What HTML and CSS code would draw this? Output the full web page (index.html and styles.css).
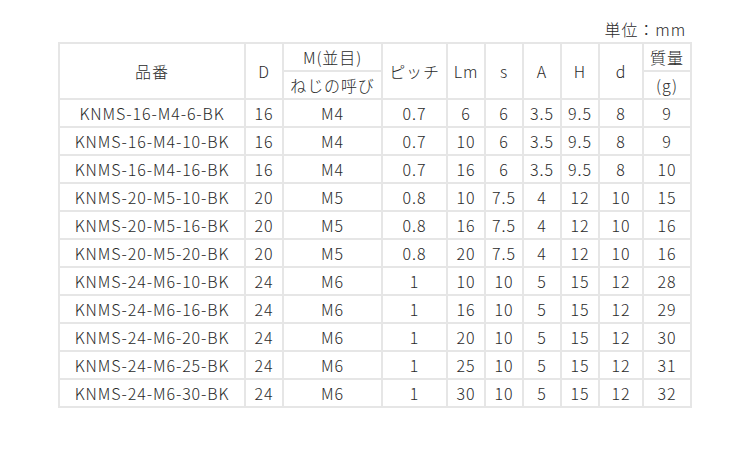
FILE: index.html
```html
<!DOCTYPE html>
<html lang="ja">
<head>
<meta charset="utf-8">
<link rel="stylesheet" href="styles.css">
</head>
<body>
<div class="wrap">
  <div class="unit">単位：mm</div>
  <table class="spec">
    <colgroup>
      <col class="c-name"><col class="c-d"><col class="c-m"><col class="c-p">
      <col class="c-n"><col class="c-n"><col class="c-n"><col class="c-n">
      <col class="c-dd"><col class="c-w">
    </colgroup>
    <thead>
      <tr>
        <th rowspan="2">品番</th>
        <th rowspan="2">D</th>
        <th>M(並目)</th>
        <th rowspan="2">ピッチ</th>
        <th rowspan="2">Lm</th>
        <th rowspan="2">s</th>
        <th rowspan="2">A</th>
        <th rowspan="2">H</th>
        <th rowspan="2">d</th>
        <th>質量</th>
      </tr>
      <tr>
        <th>ねじの呼び</th>
        <th>(g)</th>
      </tr>
    </thead>
    <tbody>
      <tr><td>KNMS-16-M4-6-BK</td><td>16</td><td>M4</td><td>0.7</td><td>6</td><td>6</td><td>3.5</td><td>9.5</td><td>8</td><td>9</td></tr>
      <tr><td>KNMS-16-M4-10-BK</td><td>16</td><td>M4</td><td>0.7</td><td>10</td><td>6</td><td>3.5</td><td>9.5</td><td>8</td><td>9</td></tr>
      <tr><td>KNMS-16-M4-16-BK</td><td>16</td><td>M4</td><td>0.7</td><td>16</td><td>6</td><td>3.5</td><td>9.5</td><td>8</td><td>10</td></tr>
      <tr><td>KNMS-20-M5-10-BK</td><td>20</td><td>M5</td><td>0.8</td><td>10</td><td>7.5</td><td>4</td><td>12</td><td>10</td><td>15</td></tr>
      <tr><td>KNMS-20-M5-16-BK</td><td>20</td><td>M5</td><td>0.8</td><td>16</td><td>7.5</td><td>4</td><td>12</td><td>10</td><td>16</td></tr>
      <tr><td>KNMS-20-M5-20-BK</td><td>20</td><td>M5</td><td>0.8</td><td>20</td><td>7.5</td><td>4</td><td>12</td><td>10</td><td>16</td></tr>
      <tr><td>KNMS-24-M6-10-BK</td><td>24</td><td>M6</td><td>1</td><td>10</td><td>10</td><td>5</td><td>15</td><td>12</td><td>28</td></tr>
      <tr><td>KNMS-24-M6-16-BK</td><td>24</td><td>M6</td><td>1</td><td>16</td><td>10</td><td>5</td><td>15</td><td>12</td><td>29</td></tr>
      <tr><td>KNMS-24-M6-20-BK</td><td>24</td><td>M6</td><td>1</td><td>20</td><td>10</td><td>5</td><td>15</td><td>12</td><td>30</td></tr>
      <tr><td>KNMS-24-M6-25-BK</td><td>24</td><td>M6</td><td>1</td><td>25</td><td>10</td><td>5</td><td>15</td><td>12</td><td>31</td></tr>
      <tr><td>KNMS-24-M6-30-BK</td><td>24</td><td>M6</td><td>1</td><td>30</td><td>10</td><td>5</td><td>15</td><td>12</td><td>32</td></tr>
    </tbody>
  </table>
</div>
</body>
</html>
```

FILE: styles.css
```css
html, body {
  margin: 0;
  padding: 0;
  background: #ffffff;
}
body {
  font-family: "Noto Sans CJK JP", "Noto Sans", sans-serif;
  font-size: 16px;
  font-weight: 300;
  letter-spacing: 0.9px;
  color: #2a2a2a;
}
.wrap {
  width: 634px;
  padding: 16px 0 0 58px;
}
.unit {
  text-align: right;
  line-height: 26px;
  height: 26px;
  padding-right: 6px;
}
.spec {
  table-layout: fixed;
  width: 634px;
  border-collapse: separate;
  border-spacing: 2px;
  background: #e6e6e6;
}
.spec th,
.spec td {
  background: #ffffff;
  padding: 0;
  height: 26px;
  line-height: 26px;
  text-align: center;
  vertical-align: middle;
  font-weight: 300;
  white-space: nowrap;
  overflow: hidden;
}
.c-name { width: 184px; }
.c-d { width: 36px; }
.c-m { width: 97px; }
.c-p { width: 63px; }
.c-n { width: 36px; }
.c-dd { width: 42px; }
.c-w { width: 46px; }
```
